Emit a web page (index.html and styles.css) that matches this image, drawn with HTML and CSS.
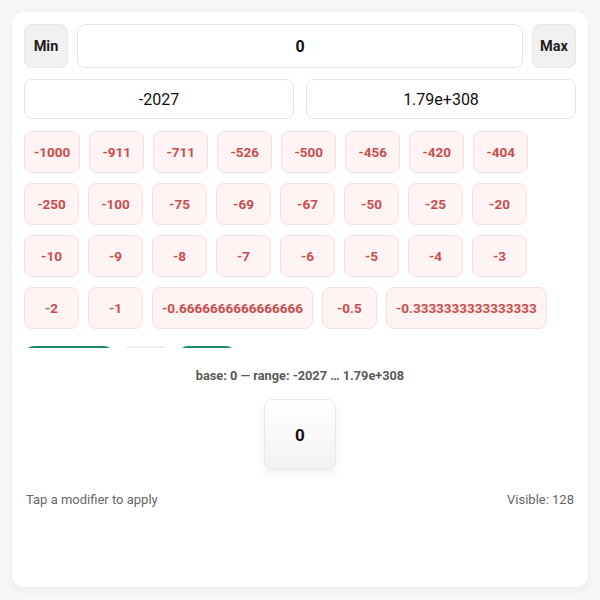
FILE: index.html
```
<!DOCTYPE html>
<html>
<head>
<meta charset="utf-8">
<link rel="stylesheet" href="styles.css">
</head>
<body>
<div class="card">
  <div class="row-top">
    <button class="side-btn">Min</button>
    <div class="field field-main">0</div>
    <button class="side-btn">Max</button>
  </div>
  <div class="row-range">
    <div class="field field-range">-2027</div>
    <div class="field field-range">1.79e+308</div>
  </div>
  <div class="chip-window">
    <div class="chips">
      <span class="chip">-1000</span><span class="chip">-911</span><span class="chip">-711</span><span class="chip">-526</span><span class="chip">-500</span><span class="chip">-456</span><span class="chip">-420</span><span class="chip">-404</span>
      <span class="chip">-250</span><span class="chip">-100</span><span class="chip">-75</span><span class="chip">-69</span><span class="chip">-67</span><span class="chip">-50</span><span class="chip">-25</span><span class="chip">-20</span>
      <span class="chip">-10</span><span class="chip">-9</span><span class="chip">-8</span><span class="chip">-7</span><span class="chip">-6</span><span class="chip">-5</span><span class="chip">-4</span><span class="chip">-3</span>
      <span class="chip">-2</span><span class="chip">-1</span><span class="chip">-0.6666666666666666</span><span class="chip">-0.5</span><span class="chip">-0.3333333333333333</span>
    </div>
    <div class="chips-next">
      <span class="chip-pos chip-wide"></span><span class="chip-zero"></span><span class="chip-pos chip-mid"></span>
    </div>
  </div>
  <div class="summary">base: 0 — range: -2027 … 1.79e+308</div>
  <div class="tile-wrap"><div class="tile">0</div></div>
  <div class="footer">
    <span>Tap a modifier to apply</span>
    <span>Visible: 128</span>
  </div>
</div>
</body>
</html>
```

FILE: styles.css
```
* { box-sizing: border-box; }
html, body { margin: 0; padding: 0; }
body {
  background: #f6f6f6;
  font-family: Roboto, "Liberation Sans", sans-serif;
  padding: 12px;
}
.card {
  background: #fff;
  border-radius: 12px;
  padding: 12px;
  height: 575px;
  box-shadow: 0 2px 10px rgba(0,0,0,0.05);
}
.row-top {
  display: flex;
  gap: 9px;
  height: 44px;
}
.side-btn {
  width: 44px;
  height: 44px;
  flex: none;
  padding: 0;
  background: #f1f1f1;
  border: 1px solid #e7e7e7;
  border-radius: 8px;
  font-family: inherit;
  font-weight: 700;
  font-size: 14.5px;
  color: #1e1e1e;
}
.field {
  border: 1px solid #e6e6e6;
  border-radius: 8px;
  background: #fff;
  display: flex;
  align-items: center;
  justify-content: center;
  color: #111;
}
.field-main {
  flex: 1;
  font-weight: 700;
  font-size: 16px;
}
.row-range {
  display: flex;
  gap: 12px;
  margin-top: 11px;
}
.field-range {
  flex: 1;
  height: 40px;
  font-size: 16px;
}
.chip-window {
  margin-top: 12px;
  height: 217px;
  overflow: hidden;
}
.chips {
  display: flex;
  flex-wrap: wrap;
  column-gap: 9px;
  row-gap: 10px;
}
.chip {
  min-width: 55px;
  height: 42px;
  padding: 0 9px;
  display: flex;
  align-items: center;
  justify-content: center;
  background: #fff3f3;
  border: 1px solid #f7dfdf;
  border-radius: 8px;
  color: #c84d4d;
  font-weight: 700;
  font-size: 13.5px;
}
.chips-next {
  display: flex;
  gap: 7px;
  margin-top: 17px;
}
.chip-pos, .chip-zero {
  height: 42px;
  border-radius: 10px;
}
.chip-pos { background: #1d8b6b; }
.chip-wide { width: 90px; }
.chip-mid { width: 58px; }
.chip-zero { width: 50px; background: #ececec; }
.summary {
  margin-top: 20px;
  text-align: center;
  font-size: 12.75px;
  line-height: 16px;
  font-weight: 700;
  color: #595959;
}
.tile-wrap {
  display: flex;
  justify-content: center;
  margin-top: 15px;
}
.tile {
  width: 72px;
  height: 71px;
  border: 1px solid #e8e8e8;
  border-radius: 8px;
  background: linear-gradient(#ffffff, #f2f2f2);
  box-shadow: 0 4px 10px rgba(0,0,0,0.06);
  display: flex;
  align-items: center;
  justify-content: center;
  font-weight: 700;
  font-size: 17px;
  color: #111;
}
.footer {
  display: flex;
  justify-content: space-between;
  margin-top: 22px;
  padding: 0 2px;
  font-size: 13px;
  line-height: 16px;
  color: #666;
}
```
